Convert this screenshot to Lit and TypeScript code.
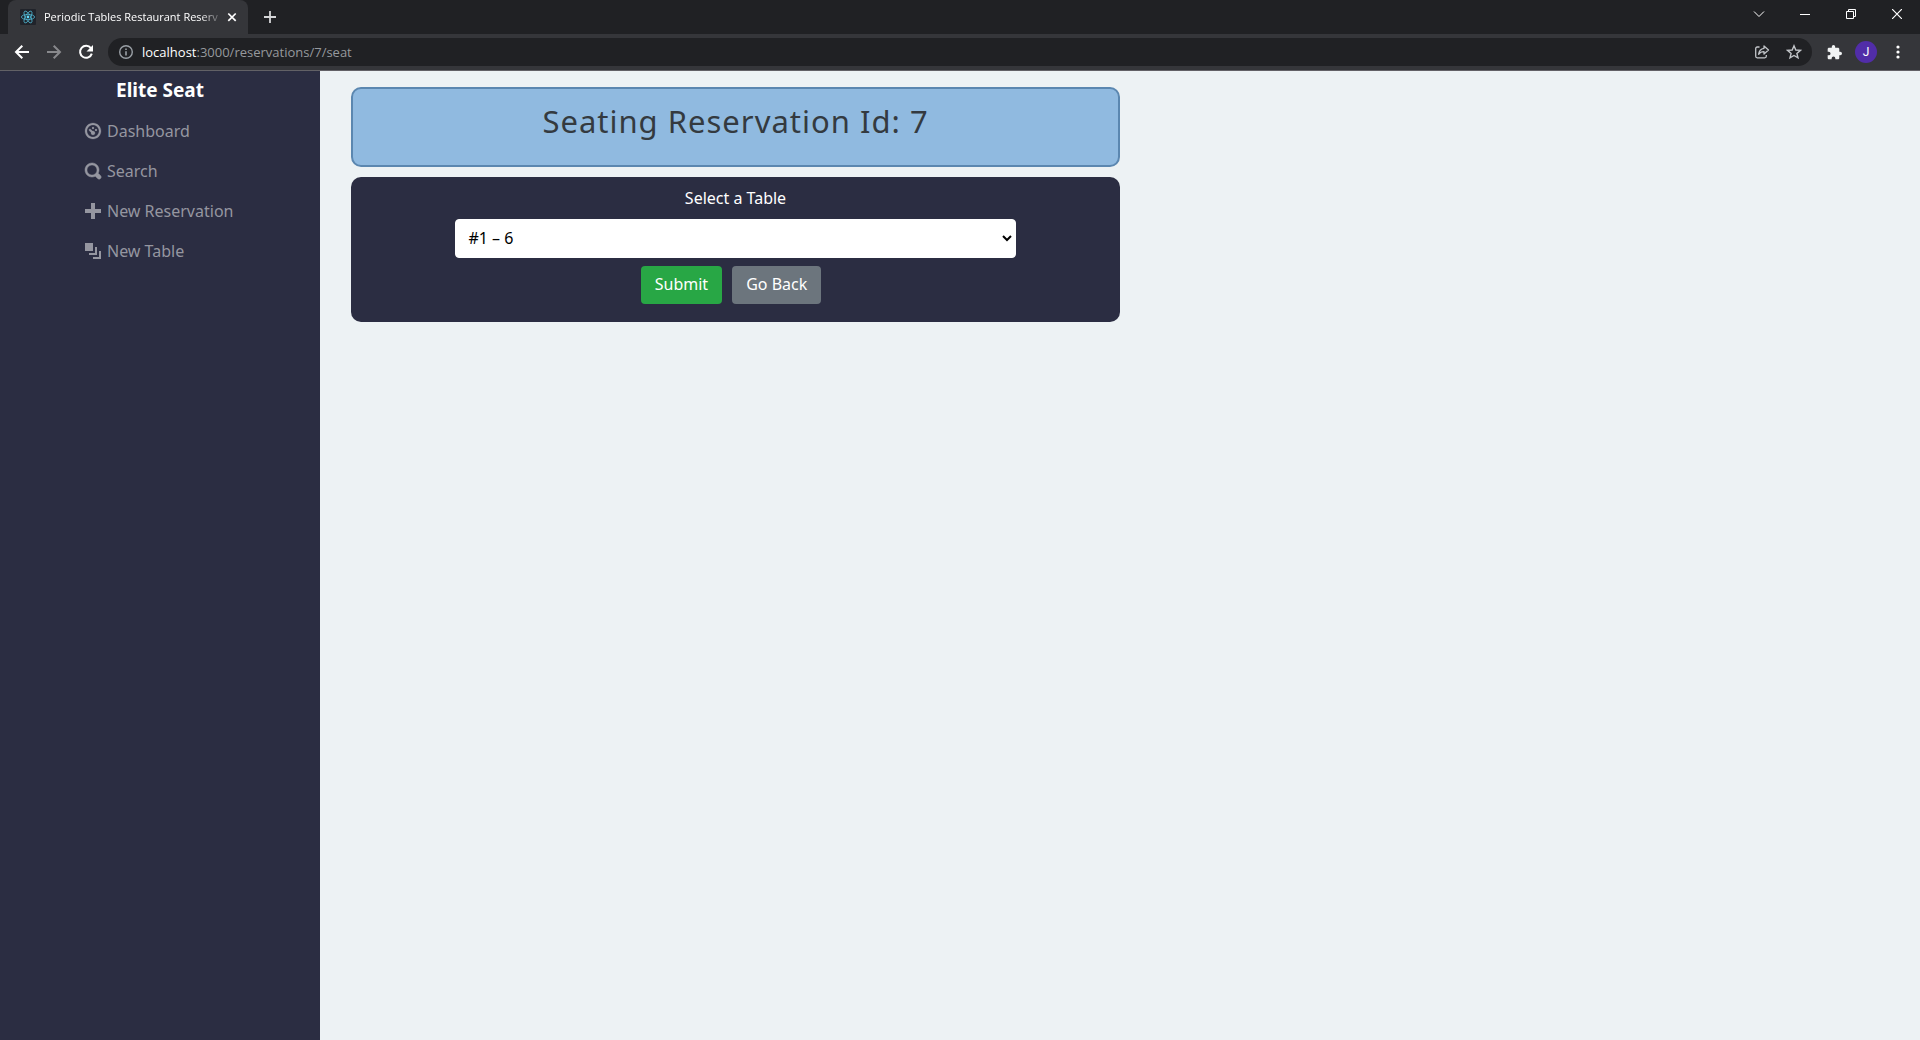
import { LitElement, html, css, svg } from "lit";
import { customElement, property, state } from "lit/decorators.js";

const navIcons = {
  dashboard: svg`<path stroke="currentColor" stroke-width="0.12" d="M4 0c-2.2 0-4 1.8-4 4s1.8 4 4 4 4-1.8 4-4-1.8-4-4-4zm0 1c1.66 0 3 1.34 3 3s-1.34 3-3 3-3-1.34-3-3 1.34-3 3-3zm0 1c-.28 0-.5.22-.5.5s.22.5.5.5.5-.22.5-.5-.22-.5-.5-.5zm-1.66 1a.5.5 0 0 0-.19.84l.91.91c-.02.08-.06.16-.06.25 0 .55.45 1 1 1s1-.45 1-1-.45-1-1-1c-.09 0-.17.04-.25.06l-.91-.91a.5.5 0 0 0-.5-.15zm3.16 0c-.28 0-.5.22-.5.5s.22.5.5.5.5-.22.5-.5-.22-.5-.5-.5z"/>`,
  search: svg`<path stroke="currentColor" stroke-width="0.25" d="M3.5 0c-1.93 0-3.5 1.57-3.5 3.5s1.57 3.5 3.5 3.5c.59 0 1.17-.14 1.66-.41a1 1 0 0 0 .13.13l1 1a1.02 1.02 0 1 0 1.44-1.44l-1-1a1 1 0 0 0-.16-.13c.27-.49.44-1.06.44-1.66 0-1.93-1.55-3.5-3.5-3.5zm0 1c1.39 0 2.5 1.1 2.5 2.5 0 .66-.24 1.27-.66 1.72l-.03.03a1 1 0 0 0-.13.13c-.44.4-1.04.63-1.69.63-1.4 0-2.5-1.11-2.5-2.5s1.1-2.5 2.5-2.5z"/>`,
  plus: svg`<path d="M3 0v3h-3v2h3v3h2v-3h3v-2h-3v-3h-2z"/>`,
  layers: svg`<path d="M0 0v4h4v-4h-4zm5 2v3h-3v1h4v-4h-1zm2 2v3h-3v1h4v-4h-1z"/>`,
};

@customElement("browser-bar")
class BrowserBar extends LitElement {
  @property() pageTitle = "";
  @property() host = "";
  @property() path = "";

  static styles = css`
    :host {
      display: block;
      font-family: "Noto Sans", sans-serif;
      color: #fff;
      background: #35363a;
      border-bottom: 1px solid #626166;
    }
    button {
      display: flex;
      align-items: center;
      justify-content: center;
      flex: none;
      margin: 0;
      padding: 0;
      border: 0;
      background: none;
      color: inherit;
      font: inherit;
    }
    svg {
      display: block;
      fill: none;
      stroke: currentColor;
    }
    .strip {
      display: flex;
      height: 34px;
      padding-left: 8px;
      background: #202124;
    }
    .tab {
      display: flex;
      align-items: center;
      box-sizing: border-box;
      width: 240px;
      padding: 0 8px 0 12px;
      border-radius: 8px 8px 0 0;
      background: #35363a;
    }
    .title {
      flex: 1;
      min-width: 0;
      padding-left: 8px;
      overflow: hidden;
      white-space: nowrap;
      font-family: "Open Sans", sans-serif;
      font-size: 11px;
      line-height: 16px;
      mask-image: linear-gradient(to right, #000 calc(100% - 24px), transparent);
    }
    .close {
      width: 16px;
      height: 16px;
    }
    .add {
      width: 28px;
      height: 28px;
      margin: 3px 0 0 8px;
      color: #d5d6d8;
    }
    .window {
      display: flex;
      margin-left: auto;
    }
    .window button {
      width: 46px;
      height: 28px;
    }
    .tools {
      display: flex;
      align-items: center;
      height: 36px;
      padding: 0 6px;
    }
    .tools button {
      width: 32px;
      height: 28px;
    }
    .tools .dim {
      color: #88898c;
    }
    .address {
      display: flex;
      align-items: center;
      flex: 1;
      height: 28px;
      margin: 0 6px;
      padding: 0 2px;
      border-radius: 14px;
      background: #202124;
      color: #9aa0a6;
    }
    .url {
      flex: 1;
      font-family: "Open Sans", sans-serif;
      font-size: 13px;
      line-height: 20px;
      color: #96999d;
    }
    .url b {
      font-weight: 400;
      color: #fff;
    }
    .address .action {
      color: #c2c5c9;
    }
    .avatar {
      display: flex;
      align-items: center;
      justify-content: center;
      width: 22px;
      height: 22px;
      border-radius: 50%;
      background: #512da8;
      font-family: Roboto, sans-serif;
      font-size: 12px;
    }
  `;

  render() {
    return html`
      <div class="strip">
        <div class="tab">
          <svg width="16" height="16" viewBox="0 0 16 16">
            <rect width="16" height="16" rx="1" fill="#20232a" stroke="none" />
            <g stroke="#4fb4cf" stroke-width="0.8">
              <ellipse cx="8" cy="8" rx="6.6" ry="2.6" />
              <ellipse cx="8" cy="8" rx="6.6" ry="2.6" transform="rotate(60 8 8)" />
              <ellipse cx="8" cy="8" rx="6.6" ry="2.6" transform="rotate(120 8 8)" />
            </g>
            <circle cx="8" cy="8" r="1.4" fill="#61dafb" stroke="none" />
          </svg>
          <span class="title">${this.pageTitle}</span>
          <button class="close" aria-label="Close tab">
            <svg width="16" height="16" stroke-width="1.7"><path d="M4.3 4.5l7.4 7.4M11.7 4.5l-7.4 7.4" /></svg>
          </button>
        </div>
        <button class="add" aria-label="New tab">
          <svg width="14" height="14" stroke-width="1.8"><path d="M7 1v12M1 7h12" /></svg>
        </button>
        <div class="window">
          <button aria-label="Search tabs">
            <svg width="12" height="12" stroke-width="1"><path d="M1 3.5l5 5 5-5" /></svg>
          </button>
          <button aria-label="Minimize">
            <svg width="10" height="10"><path d="M0 5.5h10" /></svg>
          </button>
          <button aria-label="Restore">
            <svg width="10" height="10"><path d="M.5 2.5h7v7h-7zM2.5 2.5v-2h7v7h-2" /></svg>
          </button>
          <button aria-label="Close window">
            <svg width="10" height="10" stroke-width="1.2"><path d="M0 0l10 10M10 0l-10 10" /></svg>
          </button>
        </div>
      </div>
      <div class="tools">
        <button aria-label="Back">
          <svg width="16" height="16" stroke-width="2"><path d="M15 8H2.5M8.3 1.7L2 8l6.3 6.3" /></svg>
        </button>
        <button class="dim" aria-label="Forward">
          <svg width="16" height="16" stroke-width="2"><path d="M1 8h12.5M7.7 1.7L14 8l-6.3 6.3" /></svg>
        </button>
        <button aria-label="Reload">
          <svg width="16" height="16" stroke-width="2">
            <path d="M12.9 4.2A6 6 0 1 0 13.8 9.6" />
            <path d="M15 1v6.5H8.5z" fill="currentColor" stroke="none" />
          </svg>
        </button>
        <div class="address">
          <button aria-label="Site information">
            <svg width="16" height="16" stroke-width="1.4">
              <circle cx="8" cy="8" r="6.3" />
              <path d="M8 7.2v4.3M8 4.5v1.5" stroke-width="1.6" />
            </svg>
          </button>
          <span class="url"><b>${this.host}</b>${this.path}</span>
          <button class="action" aria-label="Share">
            <svg width="16" height="16" stroke-width="1.3" stroke-linejoin="round">
              <path d="M5.5 3H3.2C2.3 3 1.7 3.6 1.7 4.5v7.8c0 .9.6 1.5 1.5 1.5h7.6c.9 0 1.5-.6 1.5-1.5v-1.3" />
              <path d="M10 2l4.5 4L10 10V7.7C7.5 7.7 5.8 8.5 4.6 10.3 5 7 7 4.7 10 4.3z" />
            </svg>
          </button>
          <button class="action" aria-label="Bookmark this page">
            <svg width="16" height="16" stroke-width="1.4">
              <path d="M8 1.8l1.8 4.2 4.6.4-3.5 3 1.1 4.5L8 11.5l-4 2.4 1.1-4.5-3.5-3 4.6-.4z" />
            </svg>
          </button>
        </div>
        <button aria-label="Extensions">
          <svg width="15" height="15" viewBox="1 1 22 22" stroke="none">
            <path fill="#f1f3f4" stroke="none" d="M20.5 11H19V7c0-1.1-.9-2-2-2h-4V3.5a2.5 2.5 0 0 0-5 0V5H4c-1.1 0-2 .9-2 2v3.8h1.5a2.7 2.7 0 0 1 0 5.4H2V20c0 1.1.9 2 2 2h3.8v-1.5a2.7 2.7 0 0 1 5.4 0V22H17c1.1 0 2-.9 2-2v-4h1.5a2.5 2.5 0 0 0 0-5z" />
          </svg>
        </button>
        <button aria-label="Profile"><span class="avatar">J</span></button>
        <button aria-label="Browser menu">
          <svg width="4" height="14">
            <g fill="#fff" stroke="none"><circle cx="2" cy="2" r="1.6" /><circle cx="2" cy="7" r="1.6" /><circle cx="2" cy="12" r="1.6" /></g>
          </svg>
        </button>
      </div>
    `;
  }
}

@customElement("side-menu")
class SideMenu extends LitElement {
  static styles = css`
    :host {
      display: block;
      background: #2b2d42;
    }
    .brand {
      display: block;
      padding-top: 5px;
      text-align: center;
      font-size: 19px;
      font-weight: 700;
      line-height: 28px;
      color: #fff;
      text-decoration: none;
    }
    ul {
      display: flex;
      flex-direction: column;
      gap: 16px;
      width: 150px;
      margin: 15px auto 0;
      padding: 0;
      list-style: none;
    }
    .link {
      display: flex;
      align-items: center;
      gap: 6px;
      line-height: 24px;
      white-space: nowrap;
      color: #9596a0;
      text-decoration: none;
    }
    .icon {
      flex: none;
      width: 16px;
      height: 16px;
      fill: currentColor;
      overflow: visible;
    }
  `;

  private items = [
    { label: "Dashboard", href: "/dashboard", icon: navIcons.dashboard },
    { label: "Search", href: "/search", icon: navIcons.search },
    { label: "New Reservation", href: "/reservations/new", icon: navIcons.plus },
    { label: "New Table", href: "/tables/new", icon: navIcons.layers },
  ];

  render() {
    return html`
      <a class="brand" href="/">Elite Seat</a>
      <nav>
        <ul>
          ${this.items.map(
            (item) => html`<li>
              <a class="link" href=${item.href}>
                <svg class="icon" viewBox="0 0 8 8" aria-hidden="true">${item.icon}</svg>
                ${item.label}
              </a>
            </li>`
          )}
        </ul>
      </nav>
    `;
  }
}

@customElement("seat-form")
class SeatForm extends LitElement {
  @property({ type: Number }) reservation = 0;
  @state() private tables = [{ id: 1, name: "#1", capacity: 6 }];

  static styles = css`
    :host {
      display: flex;
      flex-direction: column;
      gap: 10px;
    }
    h1 {
      box-sizing: border-box;
      min-height: 80px;
      margin: 0;
      padding: 12px 16px;
      border: 2px solid #5b87b0;
      border-radius: 10px;
      background: #90bae0;
      color: #343a40;
      font-size: 31px;
      font-weight: 400;
      line-height: 40px;
      letter-spacing: 1px;
      text-align: center;
    }
    form {
      display: flex;
      flex-direction: column;
      align-items: center;
      padding: 9px 16px 18px;
      border-radius: 10px;
      background: #2b2d42;
      color: #fff;
    }
    label {
      line-height: 24px;
    }
    select {
      box-sizing: border-box;
      width: 76%;
      height: 39px;
      margin: 9px 0 8px;
      padding: 5px 8px 7px;
      border: 1px solid #fff;
      border-radius: 4px;
      background: #fff;
      color: #000;
      font: inherit;
    }
    .actions {
      display: flex;
      gap: 10px;
      padding-right: 9px;
    }
    button {
      padding: 5px 13px 7px;
      border: 1px solid transparent;
      border-radius: 4px;
      color: #fff;
      font: inherit;
      line-height: 24px;
    }
    .submit {
      background: #28a745;
    }
    .back {
      background: #6c757d;
    }
  `;

  render() {
    return html`
      <h1>Seating Reservation Id: ${this.reservation}</h1>
      <form @submit=${(e: Event) => e.preventDefault()}>
        <label for="table">Select a Table</label>
        <select id="table" name="table">
          ${this.tables.map((t) => html`<option value=${t.id}>${t.name} – ${t.capacity}</option>`)}
        </select>
        <div class="actions">
          <button class="submit" type="submit">Submit</button>
          <button class="back" type="button">Go Back</button>
        </div>
      </form>
    `;
  }
}

@customElement("app-root")
class AppRoot extends LitElement {
  static styles = css`
    :host {
      display: flex;
      flex-direction: column;
      min-height: 100vh;
      background: #edf2f4;
      font-family: "Noto Sans", sans-serif;
      font-size: 16px;
    }
    .page {
      display: grid;
      grid-template-columns: 1fr 5fr;
      flex: 1;
    }
    main {
      padding: 16px 31px;
    }
    seat-form {
      width: 50%;
    }
  `;

  render() {
    return html`
      <browser-bar
        pageTitle="Periodic Tables Restaurant Reserv"
        host="localhost"
        path=":3000/reservations/7/seat"
      ></browser-bar>
      <div class="page">
        <side-menu></side-menu>
        <main><seat-form .reservation=${7}></seat-form></main>
      </div>
    `;
  }
}
